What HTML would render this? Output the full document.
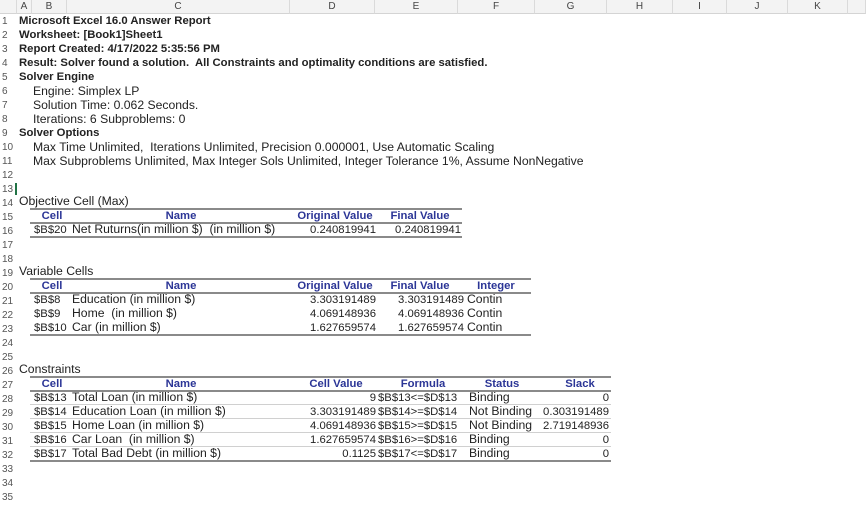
<!DOCTYPE html>
<html><head><meta charset="utf-8"><style>
body{margin:0;width:866px;height:507px;background:#fff;position:relative;overflow:hidden;font-family:"Liberation Sans",sans-serif;color:#222}
.h{position:absolute;top:0;height:14px;background:#f3f3f3;border-bottom:1px solid #d4d4d4;border-right:1px solid #dadada;font-size:10px;color:#444;text-align:center;line-height:14px;box-sizing:border-box}
.rn{position:absolute;left:0;width:16px;font-size:10px;color:#555;line-height:14px;text-align:left;padding-left:2px}
.t{position:absolute;font-size:12.2px;line-height:13px;white-space:pre;margin-top:-1px}
.n{font-size:11.3px;line-height:13px;margin-top:0}
.b{font-weight:bold;font-size:11.3px;line-height:13px;margin-top:0}
.hd{position:absolute;font-weight:bold;font-size:11.3px;color:#2b3596;line-height:13px;text-align:center;white-space:pre}
.r{text-align:right}
.ln{position:absolute;height:2px;background:#8a8a8a}
.ln1{position:absolute;height:1px;background:#d0d0d0}
</style></head><body>
<div class="h" style="left:0;width:17px"></div>
<div class="h" style="left:17px;width:15px">A</div>
<div class="h" style="left:32px;width:35px">B</div>
<div class="h" style="left:67px;width:223px">C</div>
<div class="h" style="left:290px;width:85px">D</div>
<div class="h" style="left:375px;width:83px">E</div>
<div class="h" style="left:458px;width:77px">F</div>
<div class="h" style="left:535px;width:72px">G</div>
<div class="h" style="left:607px;width:66px">H</div>
<div class="h" style="left:673px;width:54px">I</div>
<div class="h" style="left:727px;width:61px">J</div>
<div class="h" style="left:788px;width:60px">K</div>
<div class="h" style="left:848px;width:18px"></div>
<div style="position:absolute;left:15px;top:183px;width:2px;height:12px;background:#217346"></div>

<div class="rn" style="top:15px">1</div><div class="rn" style="top:29px">2</div><div class="rn" style="top:43px">3</div><div class="rn" style="top:57px">4</div><div class="rn" style="top:71px">5</div><div class="rn" style="top:85px">6</div><div class="rn" style="top:99px">7</div><div class="rn" style="top:113px">8</div><div class="rn" style="top:127px">9</div><div class="rn" style="top:141px">10</div><div class="rn" style="top:155px">11</div><div class="rn" style="top:169px">12</div><div class="rn" style="top:183px">13</div><div class="rn" style="top:197px">14</div><div class="rn" style="top:211px">15</div><div class="rn" style="top:225px">16</div><div class="rn" style="top:239px">17</div><div class="rn" style="top:253px">18</div><div class="rn" style="top:267px">19</div><div class="rn" style="top:281px">20</div><div class="rn" style="top:295px">21</div><div class="rn" style="top:309px">22</div><div class="rn" style="top:323px">23</div><div class="rn" style="top:337px">24</div><div class="rn" style="top:351px">25</div><div class="rn" style="top:365px">26</div><div class="rn" style="top:379px">27</div><div class="rn" style="top:393px">28</div><div class="rn" style="top:407px">29</div><div class="rn" style="top:421px">30</div><div class="rn" style="top:435px">31</div><div class="rn" style="top:449px">32</div><div class="rn" style="top:463px">33</div><div class="rn" style="top:477px">34</div><div class="rn" style="top:491px">35</div>

<div class="t b" style="left:19px;top:15px">Microsoft Excel 16.0 Answer Report</div>
<div class="t b" style="left:19px;top:29px">Worksheet: [Book1]Sheet1</div>
<div class="t b" style="left:19px;top:43px">Report Created: 4/17/2022 5:35:56 PM</div>
<div class="t b" style="left:19px;top:57px">Result: Solver found a solution.  All Constraints and optimality conditions are satisfied.</div>
<div class="t b" style="left:19px;top:71px">Solver Engine</div>
<div class="t" style="left:33px;top:86px">Engine: Simplex LP</div>
<div class="t" style="left:33px;top:100px">Solution Time: 0.062 Seconds.</div>
<div class="t" style="left:33px;top:114px">Iterations: 6 Subproblems: 0</div>
<div class="t b" style="left:19px;top:127px">Solver Options</div>
<div class="t" style="left:33px;top:142px">Max Time Unlimited,  Iterations Unlimited, Precision 0.000001, Use Automatic Scaling</div>
<div class="t" style="left:33px;top:156px">Max Subproblems Unlimited, Max Integer Sols Unlimited, Integer Tolerance 1%, Assume NonNegative</div>

<!-- Objective -->
<div class="t" style="left:19px;top:196px">Objective Cell (Max)</div>
<div class="ln" style="left:30px;top:208px;width:432px"></div>
<div class="hd" style="left:32px;top:210px;width:40px">Cell</div>
<div class="hd" style="left:72px;top:210px;width:218px">Name</div>
<div class="hd" style="left:292px;top:210px;width:86px">Original Value</div>
<div class="hd" style="left:380px;top:210px;width:80px">Final Value</div>
<div class="ln" style="left:30px;top:222px;width:432px"></div>
<div class="t n" style="left:34px;top:224px">$B$20</div>
<div class="t" style="left:72px;top:224px">Net Ruturns(in million $)  (in million $)</div>
<div class="t n r" style="left:290px;top:224px;width:86px">0.240819941</div>
<div class="t n r" style="left:375px;top:224px;width:86px">0.240819941</div>
<div class="ln" style="left:30px;top:236px;width:432px"></div>

<!-- Variable -->
<div class="t" style="left:19px;top:266px">Variable Cells</div>
<div class="ln" style="left:30px;top:278px;width:501px"></div>
<div class="hd" style="left:32px;top:280px;width:40px">Cell</div>
<div class="hd" style="left:72px;top:280px;width:218px">Name</div>
<div class="hd" style="left:292px;top:280px;width:86px">Original Value</div>
<div class="hd" style="left:380px;top:280px;width:80px">Final Value</div>
<div class="hd" style="left:466px;top:280px;width:60px">Integer</div>
<div class="ln" style="left:30px;top:292px;width:501px"></div>
<div class="t n" style="left:34px;top:294px">$B$8</div><div class="t" style="left:72px;top:294px">Education (in million $)</div>
<div class="t n r" style="left:290px;top:294px;width:86px">3.303191489</div><div class="t n r" style="left:375px;top:294px;width:89px">3.303191489</div><div class="t" style="left:467px;top:294px">Contin</div>
<div class="t n" style="left:34px;top:308px">$B$9</div><div class="t" style="left:72px;top:308px">Home  (in million $)</div>
<div class="t n r" style="left:290px;top:308px;width:86px">4.069148936</div><div class="t n r" style="left:375px;top:308px;width:89px">4.069148936</div><div class="t" style="left:467px;top:308px">Contin</div>
<div class="t n" style="left:34px;top:322px">$B$10</div><div class="t" style="left:72px;top:322px">Car (in million $)</div>
<div class="t n r" style="left:290px;top:322px;width:86px">1.627659574</div><div class="t n r" style="left:375px;top:322px;width:89px">1.627659574</div><div class="t" style="left:467px;top:322px">Contin</div>
<div class="ln" style="left:30px;top:334px;width:501px"></div>

<!-- Constraints -->
<div class="t" style="left:19px;top:364px">Constraints</div>
<div class="ln" style="left:30px;top:376px;width:581px"></div>
<div class="hd" style="left:32px;top:378px;width:40px">Cell</div>
<div class="hd" style="left:72px;top:378px;width:218px">Name</div>
<div class="hd" style="left:300px;top:378px;width:72px">Cell Value</div>
<div class="hd" style="left:380px;top:378px;width:86px">Formula</div>
<div class="hd" style="left:467px;top:378px;width:70px">Status</div>
<div class="hd" style="left:545px;top:378px;width:70px">Slack</div>
<div class="ln" style="left:30px;top:390px;width:581px"></div>
<div class="t n" style="left:34px;top:392px">$B$13</div><div class="t" style="left:72px;top:392px">Total Loan (in million $)</div>
<div class="t n r" style="left:290px;top:392px;width:86px">9</div><div class="t n" style="left:378px;top:392px">$B$13&lt;=$D$13</div><div class="t" style="left:469px;top:392px">Binding</div><div class="t n r" style="left:530px;top:392px;width:79px">0</div>
<div class="ln1" style="left:30px;top:404px;width:581px"></div>
<div class="t n" style="left:34px;top:406px">$B$14</div><div class="t" style="left:72px;top:406px">Education Loan (in million $)</div>
<div class="t n r" style="left:290px;top:406px;width:86px">3.303191489</div><div class="t n" style="left:378px;top:406px">$B$14&gt;=$D$14</div><div class="t" style="left:469px;top:406px">Not Binding</div><div class="t n r" style="left:530px;top:406px;width:79px">0.303191489</div>
<div class="ln1" style="left:30px;top:418px;width:581px"></div>
<div class="t n" style="left:34px;top:420px">$B$15</div><div class="t" style="left:72px;top:420px">Home Loan (in million $)</div>
<div class="t n r" style="left:290px;top:420px;width:86px">4.069148936</div><div class="t n" style="left:378px;top:420px">$B$15&gt;=$D$15</div><div class="t" style="left:469px;top:420px">Not Binding</div><div class="t n r" style="left:530px;top:420px;width:79px">2.719148936</div>
<div class="ln1" style="left:30px;top:432px;width:581px"></div>
<div class="t n" style="left:34px;top:434px">$B$16</div><div class="t" style="left:72px;top:434px">Car Loan  (in million $)</div>
<div class="t n r" style="left:290px;top:434px;width:86px">1.627659574</div><div class="t n" style="left:378px;top:434px">$B$16&gt;=$D$16</div><div class="t" style="left:469px;top:434px">Binding</div><div class="t n r" style="left:530px;top:434px;width:79px">0</div>
<div class="ln1" style="left:30px;top:446px;width:581px"></div>
<div class="t n" style="left:34px;top:448px">$B$17</div><div class="t" style="left:72px;top:448px">Total Bad Debt (in million $)</div>
<div class="t n r" style="left:290px;top:448px;width:86px">0.1125</div><div class="t n" style="left:378px;top:448px">$B$17&lt;=$D$17</div><div class="t" style="left:469px;top:448px">Binding</div><div class="t n r" style="left:530px;top:448px;width:79px">0</div>
<div class="ln" style="left:30px;top:460px;width:581px"></div>
</body></html>
